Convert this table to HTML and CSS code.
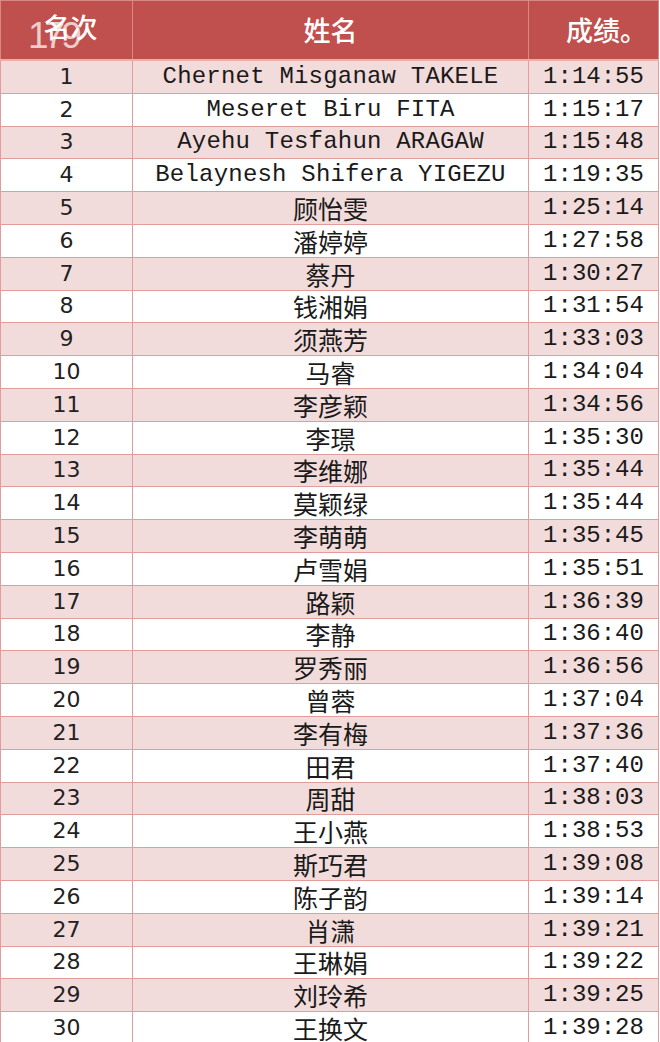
FILE: index.html
```html
<!DOCTYPE html>
<html lang="zh">
<head>
<meta charset="utf-8">
<title>成绩表</title>
<link rel="stylesheet" href="styles.css">
</head>
<body>
<table class="results">
  <thead>
    <tr class="head">
      <th class="c-rank"><span class="head-label">名次</span><span class="watermark">179</span></th>
      <th class="c-name">姓名</th>
      <th class="c-time">成绩。</th>
    </tr>
  </thead>
  <tbody>
    <tr><td class="c-rank">1</td><td class="c-name latin">Chernet Misganaw TAKELE</td><td class="c-time">1:14:55</td></tr>
    <tr><td class="c-rank">2</td><td class="c-name latin">Meseret Biru FITA</td><td class="c-time">1:15:17</td></tr>
    <tr><td class="c-rank">3</td><td class="c-name latin">Ayehu Tesfahun ARAGAW</td><td class="c-time">1:15:48</td></tr>
    <tr><td class="c-rank">4</td><td class="c-name latin">Belaynesh Shifera YIGEZU</td><td class="c-time">1:19:35</td></tr>
    <tr><td class="c-rank">5</td><td class="c-name">顾怡雯</td><td class="c-time">1:25:14</td></tr>
    <tr><td class="c-rank">6</td><td class="c-name">潘婷婷</td><td class="c-time">1:27:58</td></tr>
    <tr><td class="c-rank">7</td><td class="c-name">蔡丹</td><td class="c-time">1:30:27</td></tr>
    <tr><td class="c-rank">8</td><td class="c-name">钱湘娟</td><td class="c-time">1:31:54</td></tr>
    <tr><td class="c-rank">9</td><td class="c-name">须燕芳</td><td class="c-time">1:33:03</td></tr>
    <tr><td class="c-rank">10</td><td class="c-name">马睿</td><td class="c-time">1:34:04</td></tr>
    <tr><td class="c-rank">11</td><td class="c-name">李彦颖</td><td class="c-time">1:34:56</td></tr>
    <tr><td class="c-rank">12</td><td class="c-name">李璟</td><td class="c-time">1:35:30</td></tr>
    <tr><td class="c-rank">13</td><td class="c-name">李维娜</td><td class="c-time">1:35:44</td></tr>
    <tr><td class="c-rank">14</td><td class="c-name">莫颖绿</td><td class="c-time">1:35:44</td></tr>
    <tr><td class="c-rank">15</td><td class="c-name">李萌萌</td><td class="c-time">1:35:45</td></tr>
    <tr><td class="c-rank">16</td><td class="c-name">卢雪娟</td><td class="c-time">1:35:51</td></tr>
    <tr><td class="c-rank">17</td><td class="c-name">路颖</td><td class="c-time">1:36:39</td></tr>
    <tr><td class="c-rank">18</td><td class="c-name">李静</td><td class="c-time">1:36:40</td></tr>
    <tr><td class="c-rank">19</td><td class="c-name">罗秀丽</td><td class="c-time">1:36:56</td></tr>
    <tr><td class="c-rank">20</td><td class="c-name">曾蓉</td><td class="c-time">1:37:04</td></tr>
    <tr><td class="c-rank">21</td><td class="c-name">李有梅</td><td class="c-time">1:37:36</td></tr>
    <tr><td class="c-rank">22</td><td class="c-name">田君</td><td class="c-time">1:37:40</td></tr>
    <tr><td class="c-rank">23</td><td class="c-name">周甜</td><td class="c-time">1:38:03</td></tr>
    <tr><td class="c-rank">24</td><td class="c-name">王小燕</td><td class="c-time">1:38:53</td></tr>
    <tr><td class="c-rank">25</td><td class="c-name">斯巧君</td><td class="c-time">1:39:08</td></tr>
    <tr><td class="c-rank">26</td><td class="c-name">陈子韵</td><td class="c-time">1:39:14</td></tr>
    <tr><td class="c-rank">27</td><td class="c-name">肖潇</td><td class="c-time">1:39:21</td></tr>
    <tr><td class="c-rank">28</td><td class="c-name">王琳娟</td><td class="c-time">1:39:22</td></tr>
    <tr><td class="c-rank">29</td><td class="c-name">刘玲希</td><td class="c-time">1:39:25</td></tr>
    <tr><td class="c-rank">30</td><td class="c-name">王换文</td><td class="c-time">1:39:28</td></tr>
  </tbody>
</table>
</body>
</html>
```
FILE: styles.css
```css
html, body {
  margin: 0;
  padding: 0;
  background: #ffffff;
}

.results {
  border-collapse: collapse;
  table-layout: fixed;
  width: 659px;
  font-family: "Liberation Mono", "Noto Sans CJK SC", monospace;
  color: #1a1a1a;
}

.results th,
.results td {
  padding: 0;
  text-align: center;
  vertical-align: middle;
  white-space: nowrap;
}

.results .c-rank { width: 131px; }
.results .c-name { width: 395px; }
.results .c-time { width: 129px; }

.head th {
  height: 58px;
  line-height: 30px;
  background: #c0504d;
  color: #ffffff;
  font-family: "Noto Sans CJK SC", sans-serif;
  font-weight: 500;
  font-size: 27px;
  border: 1px solid #d98886;
  border-bottom: 2px solid #e7b0af;
}

.head th.c-rank {
  position: relative;
  overflow: hidden;
}

.head-label {
  position: relative;
  left: 4px;
  top: -3px;
}

.watermark {
  position: absolute;
  left: 27px;
  top: 16px;
  line-height: 38px;
  font-family: "Liberation Sans", sans-serif;
  font-weight: 400;
  font-size: 37px;
  letter-spacing: -4px;
  color: rgba(255, 255, 255, 0.72);
}

.head th.c-time {
  text-indent: 26px;
}

tbody td {
  height: 31.8px;
  line-height: 28px;
  border: 1px solid #e39c9c;
  font-size: 24px;
}

tbody tr:nth-child(odd) td {
  background: #f2dcdb;
}

tbody td.c-rank {
  font-family: "DejaVu Sans", "Liberation Sans", sans-serif;
  font-size: 22px;
  color: #222;
}

tbody td.c-name {
  font-family: "Liberation Mono", "Noto Sans CJK SC", monospace;
  font-size: 24px;
  letter-spacing: 0.2px;
}

tbody td.c-name:not(.latin) {
  font-family: "Noto Sans CJK SC", sans-serif;
  font-weight: 400;
  font-size: 25px;
  line-height: 28px;
  letter-spacing: 0;
}

tbody td.c-time {
  font-size: 24px;
}
```
